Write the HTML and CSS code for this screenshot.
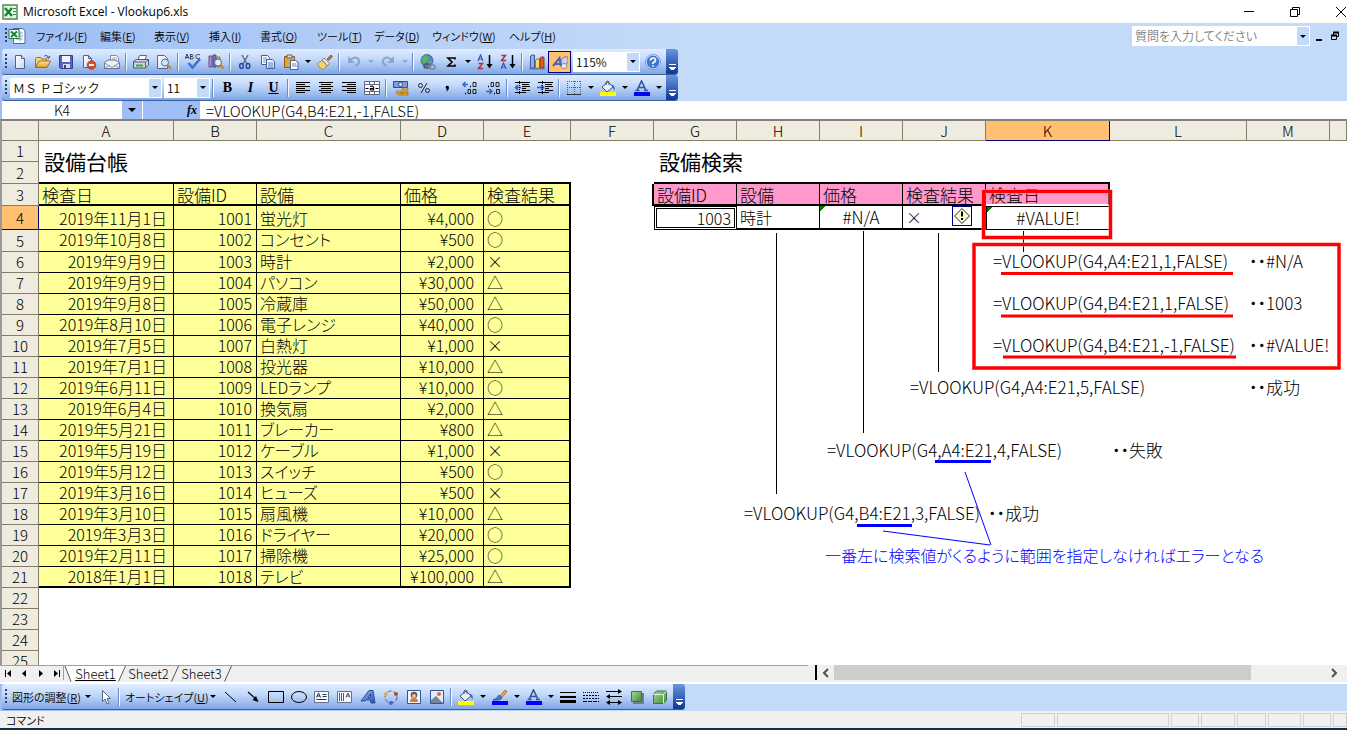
FILE: index.html
```html
<!DOCTYPE html>
<html lang="ja">
<head>
<meta charset="utf-8">
<title>Microsoft Excel - Vlookup6.xls</title>
<link rel="stylesheet" href="styles.css">
</head>
<body>
<svg class="defs" aria-hidden="true">
<defs>
<linearGradient id="gBlue" x1="0" y1="0" x2="1" y2="1"><stop offset="0" stop-color="#9dbcf5"/><stop offset="1" stop-color="#2450b0"/></linearGradient>
<linearGradient id="gPage" x1="0" y1="0" x2="1" y2="1"><stop offset="0" stop-color="#fff"/><stop offset="1" stop-color="#c8d8f2"/></linearGradient>
<linearGradient id="gGreen" x1="0" y1="0" x2="1" y2="1"><stop offset="0" stop-color="#a8dc98"/><stop offset="1" stop-color="#3c8838"/></linearGradient>
<linearGradient id="gGold" x1="0" y1="0" x2="0" y2="1"><stop offset="0" stop-color="#ffe9a0"/><stop offset="1" stop-color="#e09a20"/></linearGradient>
</defs>
<symbol id="excel" viewBox="0 0 16 16"><path d="M1 1h14v14H1z" fill="#e8f4e4" stroke="#4d8a54" stroke-width="1.500"/><path d="M3 4l7 8M10 4L3 12" stroke="#15803a" stroke-width="2.400"/><path d="M11 4.500h3M11 7.500h3M11 10.500h3" stroke="#2b8c42"/></symbol>
<symbol id="book" viewBox="0 0 18 16"><path d="M5.500.500h9l2.500 2.500v12.500H5.500z" fill="#fff" stroke="#4867a0"/><path d="M8 5h7M8 8h7M8 11h7M12 3v10" stroke="#8aa0c8"/><path d="M1 1.500h10v9H1z" fill="#f0fbf0" stroke="#267a33"/><path d="M3 3.500l6 5.500M9 3.500L3 9" stroke="#15803a" stroke-width="2"/></symbol>
<symbol id="new" viewBox="0 0 16 16"><path d="M3.500 1.500h6l3 3v10h-9z" fill="url(#gPage)" stroke="#52658e"/><path d="M9.500 1.500v3h3" fill="#dfe8f8" stroke="#52658e"/></symbol>
<symbol id="open" viewBox="0 0 16 16"><path d="M.500 13.500v-9l1-1h4l1 1.500h5v2" fill="#f7d679" stroke="#a06a14"/><path d="M.500 13.500L4 7h11.500L12 13.500z" fill="url(#gGold)" stroke="#a06a14"/><path d="M9 2.500c2-2 4-1 4.500 1.500M15 2l-1.500 2.500L11.500 3" fill="none" stroke="#394b70"/></symbol>
<symbol id="save" viewBox="0 0 16 16"><path d="M1.500 1.500h13v13h-12l-1-1z" fill="#5563c4" stroke="#353e8c"/><path d="M4 2h8v6H4z" fill="#f4f6ff"/><path d="M5 10h7v4H5z" fill="#d8dcec"/><path d="M6 11h2v3H6z" fill="#353e8c"/></symbol>
<symbol id="perm" viewBox="0 0 16 16"><path d="M2.500 1.500h5l3 3v9h-8z" fill="url(#gPage)" stroke="#52658e"/><path d="M7.500 1.500v3h3" fill="none" stroke="#52658e"/><circle cx="10.500" cy="11" r="4.300" fill="#df4a25" stroke="#8d2410" stroke-width=".6"/><path d="M8 11h5" stroke="#fff" stroke-width="2"/></symbol>
<symbol id="mail" viewBox="0 0 16 16"><path d="M6.500 1.500h6l2 2v6h-8z" fill="#fff" stroke="#7f8ba8"/><path d="M8 4h5M8 6h5" stroke="#9baac8"/><path d="M.500 8.500L4 6h7l4.500 2.500v6H.500z" fill="#eef1f8" stroke="#6a7590"/><path d="M.500 9l6.500 4h2l6-4M1 14l5-3M15 14l-5-3" fill="none" stroke="#8a95ae"/></symbol>
<symbol id="print" viewBox="0 0 16 16"><path d="M5 6l1.500-4.500h7L12 6z" fill="#fff" stroke="#5a6a8a"/><path d="M.500 7.500l3-2h12v5.500l-3 3H.500z" fill="#cfd5dc" stroke="#4d5968"/><path d="M.500 8h12l3-2.500M12.500 8v6" fill="none" stroke="#5b6572"/><path d="M3 10.500h7v2H3z" fill="#42a347"/></symbol>
<symbol id="preview" viewBox="0 0 16 16"><path d="M1.500 1.500h7l3 3v10h-10z" fill="url(#gPage)" stroke="#52658e"/><circle cx="9" cy="8.500" r="3.500" fill="#cdeaf8" stroke="#5c6880"/><path d="M11.500 11l3.500 3.500" stroke="#c08322" stroke-width="2"/></symbol>
<symbol id="spell" viewBox="0 0 16 16"><path d="M0 5l2-5 2 5M1 3.500h2M5.500 0v5M5.500.500h1.800q1.500 1 0 2H5.500h2q2 1 0 2.500h-2M15 1q-4-2-4 1.500T15 4" fill="none" stroke="#34415f"/><path d="M3.500 9l4 4.500L15 5" fill="none" stroke="#3f70d4" stroke-width="2.600"/></symbol>
<symbol id="research" viewBox="0 0 16 16"><path d="M1 2h3v11H1z" fill="#b98fc0" stroke="#6a4a94"/><path d="M5 1h3v12H5z" fill="#6d7fd0" stroke="#3a4a8c"/><path d="M9 3h3v10H9z" fill="#f0cc60" stroke="#96702a"/><circle cx="10" cy="8.500" r="3.500" fill="#dceffa" stroke="#5c6880"/><path d="M12.500 11l3 3.500" stroke="#c08322" stroke-width="2"/></symbol>
<symbol id="cut" viewBox="0 0 16 16"><path d="M5 1l5 9M11 1L6 10" stroke="#5b6f98" stroke-width="1.500"/><ellipse cx="4.500" cy="12" rx="1.800" ry="2.500" fill="none" stroke="#2b4a9c" stroke-width="1.500"/><ellipse cx="11" cy="12" rx="1.800" ry="2.500" fill="none" stroke="#2b4a9c" stroke-width="1.500"/></symbol>
<symbol id="copy" viewBox="0 0 16 16"><path d="M1.500 1.500h6l2 2v7h-8z" fill="#fff" stroke="#41609f"/><path d="M3 4h4M3 6h4M3 8h3" stroke="#7590cc"/><path d="M6.500 5.500h6l2 2v7h-8z" fill="url(#gPage)" stroke="#41609f"/><path d="M8 9h5M8 11h5M8 13h5" stroke="#5d80cc"/></symbol>
<symbol id="paste" viewBox="0 0 16 16"><path d="M1.500 2.500h10v11h-10z" fill="#e0a438" stroke="#8c5c18"/><path d="M4 1h5v3H4z" fill="#d8dce4" stroke="#5b6478"/><path d="M7.500 6.500h5l2.500 2v7H7.500z" fill="#fff" stroke="#41609f"/><path d="M9 10h4M9 12h5" stroke="#5d80cc"/></symbol>
<symbol id="brush" viewBox="0 0 16 16"><path d="M10 5l4-4 1.500 1.500-4 4z" fill="#b6793a" stroke="#6e461e" stroke-width=".7"/><path d="M7 4l5.500 5.500-2 2L5 6z" fill="#e2e4ea" stroke="#60656f" stroke-width=".7"/><path d="M5 6.500l5 5-4 4q-4-1-5.500-6z" fill="#f2d66c" stroke="#93762a" stroke-width=".7"/></symbol>
<symbol id="undo" viewBox="0 0 16 16"><path d="M4 6q6-5 9 0 1 4-4 6" fill="none" stroke="#8da5d2" stroke-width="2.200"/><path d="M2 2v7h7z" fill="#8da5d2"/></symbol>
<symbol id="redo" viewBox="0 0 16 16"><path d="M12 6Q6 1 3 6q-1 4 4 6" fill="none" stroke="#8da5d2" stroke-width="2.200"/><path d="M14 2v7H7z" fill="#8da5d2"/></symbol>
<symbol id="link" viewBox="0 0 16 16"><circle cx="7" cy="6.500" r="6" fill="#4d86d6" stroke="#245096" stroke-width=".7"/><path d="M3 3q3-3 5-1l1 3-3 2-1 3q-3-1-4-4zM9 7l3-1-1 4-2 1z" fill="#5cb752"/><rect x="4" y="10" width="6" height="4" rx="2" fill="none" stroke="#4d5668" stroke-width="1.500"/><rect x="9" y="11" width="6" height="4" rx="2" fill="none" stroke="#7b8598" stroke-width="1.500"/></symbol>
<symbol id="sigma" viewBox="0 0 16 16"><path d="M12 5.500V4H5l4 4-4 4h7v-1.500" fill="none" stroke="#000" stroke-width="1.600"/></symbol>
<symbol id="sortA" viewBox="0 0 16 16"><path d="M1 7l2.500-6L6 7M2 5h3" fill="none" stroke="#2f55b0" stroke-width="1.200"/><path d="M1.500 9.500h4l-4 5h4.500" fill="none" stroke="#a8313a" stroke-width="1.400"/><path d="M12.500 1v11" stroke="#000" stroke-width="1.500"/><path d="M9.500 10h6l-3 4.500z"/></symbol>
<symbol id="sortZ" viewBox="0 0 16 16"><path d="M1.500 1.500h4l-4 5h4.500" fill="none" stroke="#a8313a" stroke-width="1.400"/><path d="M1 15l2.500-6L6 15M2 13h3" fill="none" stroke="#2f55b0" stroke-width="1.200"/><path d="M12.500 1v11" stroke="#000" stroke-width="1.500"/><path d="M9.500 10h6l-3 4.500z"/></symbol>
<symbol id="chart" viewBox="0 0 16 16"><path d="M1.500 2l1.500-1h2.500v13h-4z" fill="#8fb0ee" stroke="#1f3f80" stroke-width=".8"/><path d="M6.500 6l1.500-1h2.500v9h-4z" fill="#f9dc5c" stroke="#8b6b14" stroke-width=".8"/><path d="M11 4l1.500-1H15v11h-4z" fill="#e4582e" stroke="#7c2110" stroke-width=".8"/><path d="M0 15h16" stroke="#5c6880"/></symbol>
<symbol id="draw" viewBox="0 0 16 16"><path d="M9 6l3-3h4v5l-3 3H9z" fill="#c8d2e4" stroke="#5c6d8c" stroke-width=".8"/><ellipse cx="12" cy="12" rx="3" ry="2.500" fill="#e8edf4" stroke="#66738c" stroke-width=".7"/><path d="M1 12L7.500 4 9 12M3 10h5.500" fill="none" stroke="#4c60bc" stroke-width="2"/></symbol>
<symbol id="help" viewBox="0 0 16 16"><circle cx="8" cy="8" r="7" fill="#3d78d8" stroke="#e8f1ff" stroke-width="1.200"/><circle cx="8" cy="8" r="7.500" fill="none" stroke="#5078b8" stroke-width=".7"/><path d="M5.500 6.500Q5.500 4 8 4t2.500 2.300Q10.500 7.500 8 9v1M8 11.300v1.400" fill="none" stroke="#fff" stroke-width="1.700"/></symbol>
<symbol id="alignL" viewBox="0 0 16 16"><path d="M1 2.500h14M1 4.500h9M1 6.500h14M1 8.500h9M1 10.500h14M1 12.500h9" stroke="#000"/></symbol>
<symbol id="alignC" viewBox="0 0 16 16"><path d="M1 2.500h14M3 4.500h10M1 6.500h14M3 8.500h10M1 10.500h14M3 12.500h10" stroke="#000"/></symbol>
<symbol id="alignR" viewBox="0 0 16 16"><path d="M1 2.500h14M6 4.500h9M1 6.500h14M6 8.500h9M1 10.500h14M6 12.500h9" stroke="#000"/></symbol>
<symbol id="merge" viewBox="0 0 16 16"><path d="M.500 1.500h15v13H.500zM.500 4.500h15M.500 11.500h15M5.500 1.500v3M10.500 1.500v3M5.500 11.500v3M10.500 11.500v3" fill="#fff" stroke="#5c6b88"/><path d="M6 6.500q3.500-1 3.500 1V10h-2q-2-.5-1-1.500h3M1.500 8.500h3M11.500 8.500h3" fill="none" stroke="#000" stroke-width="1.200"/></symbol>
<symbol id="money" viewBox="0 0 16 16"><path d="M.500 1.500h14v6H.500z" fill="#7f9cdc" stroke="#2f4c90"/><circle cx="7.500" cy="4.500" r="2" fill="#dce6fa" stroke="#2f4c90"/><path d="M9 8h6v2H9zM9 11h6v2H9zM3 11h5v2H3zM9 13h6v2H9zM5 13h4v2H5z" fill="#f2b838" stroke="#9a6514" stroke-width=".6"/></symbol>
<symbol id="percent" viewBox="0 0 16 16"><circle cx="4.500" cy="5.500" r="2" fill="none" stroke="#222"/><circle cx="11.500" cy="10.500" r="2" fill="none" stroke="#222"/><path d="M11 3L5 13" stroke="#222"/></symbol>
<symbol id="comma" viewBox="0 0 16 16"><path d="M7 6q3-1 3 2 0 2-3 4 1.500-2 .5-3Q6 8 7 6z"/></symbol>
<symbol id="incDec" viewBox="0 0 16 16"><path d="M1 4.500h5M3.500 2L1 4.500 3.500 7" fill="none" stroke="#2f62c4" stroke-width="1.500"/><path d="M8 6.500h1M3 13.500h1" stroke="#000" stroke-width="1.500"/><path d="M11 2.500h3v4h-3zM6 9.500h2.500v4H6zM11 9.500h3v4h-3z" fill="none" stroke="#222"/></symbol>
<symbol id="decDec" viewBox="0 0 16 16"><path d="M1 11.500h6M4.500 9L7 11.500 4.500 14" fill="none" stroke="#2f62c4" stroke-width="1.500"/><path d="M3 6.500h1M9 13.500h1" stroke="#000" stroke-width="1.500"/><path d="M6 2.500h2.500v4H6zM11 2.500h3v4h-3zM11.500 9.500h3v4h-3z" fill="none" stroke="#222"/></symbol>
<symbol id="outdent" viewBox="0 0 16 16"><path d="M1 2.500h15M8 4.500h7M8 6.500h8M8 8.500h4M8 10.500h8M1 12.500h11" stroke="#000"/><path d="M1.500 7.500H7M4 5L1.500 7.500 4 10" fill="none" stroke="#2f62c4" stroke-width="1.600"/><path d="M5.500 1v13" stroke="#000" stroke-dasharray="1 1"/></symbol>
<symbol id="indent" viewBox="0 0 16 16"><path d="M1 2.500h15M8 4.500h7M8 6.500h8M8 8.500h4M8 10.500h8M1 12.500h11" stroke="#000"/><path d="M0 7.500h6M4 5l2.500 2.500L4 10" fill="none" stroke="#2f62c4" stroke-width="1.600"/><path d="M5.500 1v13" stroke="#000" stroke-dasharray="1 1"/></symbol>
<symbol id="borders" viewBox="0 0 16 16"><path d="M1.500 1v13M8.500 1v13M14.500 1v13M1 1.500h14M1 7.500h14" fill="none" stroke="#56617a" stroke-dasharray="1 1"/><path d="M1 14.500h14" stroke="#333"/></symbol>
<symbol id="bucket" viewBox="0 0 16 16"><path d="M2 7l6-5 5 5-6 5z" fill="#e9f0fa" stroke="#44536e"/><path d="M6 5V2q1.500-2 3 0v3" fill="none" stroke="#44536e"/><path d="M11 4.500q5 1 3.500 6l-2-3z" fill="#3d6cc4"/><path d="M0 12h16v4H0z" fill="#ff0"/></symbol>
<symbol id="fontColor" viewBox="0 0 16 16"><path d="M3 10.500L7.500 1 12 10.500M5 7.500h5.500M1.500 10.500h4M10 10.500h4" fill="none" stroke="#34549c" stroke-width="1.600"/><path d="M0 12h16v4H0z" fill="#00f"/></symbol>
<symbol id="lineColor" viewBox="0 0 16 16"><path d="M8 7l5-6 2 1.500-5 6z" fill="#e7ad42" stroke="#8e621c" stroke-width=".7"/><path d="M7 6l3 3q-2 3-9 2 4-1 6-5z" fill="#4c76cd" stroke="#24407c" stroke-width=".7"/><path d="M0 12h16v4H0z" fill="#00f"/></symbol>
<symbol id="pointer" viewBox="0 0 16 16"><path d="M5.500 1.500v11l2.500-2.500 2 5 2-1-2-4.500h3.500z" fill="#fff" stroke="#56657e"/></symbol>
<symbol id="line" viewBox="0 0 16 16"><path d="M3 3l11 10" stroke="#000"/></symbol>
<symbol id="arrow" viewBox="0 0 16 16"><path d="M3 3l8 7" stroke="#000" stroke-width="1.200"/><path d="M13.500 13l-6-2 3.500-4z"/></symbol>
<symbol id="rect" viewBox="0 0 16 16"><path d="M.500 2.500h15v11H.500z" fill="none" stroke="#000"/></symbol>
<symbol id="oval" viewBox="0 0 16 16"><ellipse cx="8" cy="8" rx="7.500" ry="5.500" fill="none" stroke="#000"/></symbol>
<symbol id="textbox" viewBox="0 0 16 16"><path d="M.500 2.500h14v11H.500z" fill="#f6f9ff" stroke="#61718f"/><path d="M2.500 8.500L4.500 4l2 4.500M3 7h3M8.500 5.500h4M8.500 7.500h4M2.500 10.500h10" fill="none" stroke="#27344d"/></symbol>
<symbol id="vtext" viewBox="0 0 16 16"><path d="M.500 2.500h14v11H.500z" fill="#f6f9ff" stroke="#61718f"/><path d="M9 8.500L11 4l2 4.500M9.500 7h3M2.500 4v8M4.500 4v8M6.500 4v8" fill="none" stroke="#27344d" stroke-width=".8"/></symbol>
<symbol id="wordart" viewBox="0 0 16 16"><path d="M1 12L9 1.500h4L15 14h-4l-.5-3H6l-1.500 1z M8 8.500h2.500V5z" fill="url(#gBlue)" stroke="#254b9a" fill-rule="evenodd"/></symbol>
<symbol id="diagram" viewBox="0 0 16 16"><circle cx="8" cy="8" r="6" fill="none" stroke="#53617c" stroke-dasharray="4 2"/><circle cx="3" cy="5" r="2" fill="#e6b23a"/><circle cx="13" cy="5" r="2" fill="#c14335"/><circle cx="8" cy="14" r="2" fill="#4566d0"/></symbol>
<symbol id="clip" viewBox="0 0 16 16"><path d="M1.500 1.500h13v13h-13z" fill="#f1f4fa" stroke="#34559a"/><circle cx="8" cy="6" r="3.300" fill="#665850"/><circle cx="8" cy="7" r="2" fill="#eec29a"/><path d="M4 13q0-4 4-4t4 4z" fill="#e0772c"/></symbol>
<symbol id="pic" viewBox="0 0 16 16"><path d="M1.500 1.500h13v13h-13z" fill="#e3edfb" stroke="#34559a"/><circle cx="10" cy="5" r="2" fill="#df702a"/><path d="M2 11l5-4 7 7H2z" fill="#7384a4"/></symbol>
<symbol id="weight" viewBox="0 0 16 16"><path d="M0 3.500h16" stroke="#000"/><path d="M0 8h16" stroke="#000" stroke-width="2"/><path d="M0 12.500h16" stroke="#000" stroke-width="3"/></symbol>
<symbol id="dash" viewBox="0 0 16 16"><path d="M0 3.500h16" stroke="#000" stroke-dasharray="1 1"/><path d="M0 6.500h16M0 9.500h16" stroke="#000" stroke-dasharray="2 1"/><path d="M0 12.500h16" stroke="#000" stroke-dasharray="4 1"/></symbol>
<symbol id="arrows" viewBox="0 0 16 16"><path d="M0 2.500h13M3 7.500h13M2 13.500h12" stroke="#000"/><path d="M12 0l4 2.500L12 5zM4 5L0 7.500 4 10zM4 11L0 13.500 4 16zM12 11l4 2.500-4 2.500z"/></symbol>
<symbol id="shadow" viewBox="0 0 16 16"><path d="M4 4h11v11H4z" fill="#6b7c94"/><path d="M2.500 2.500h10v10h-10z" fill="url(#gGreen)" stroke="#3a7838"/></symbol>
<symbol id="cube" viewBox="0 0 16 16"><path d="M1.500 5.500l3-3.500h10v9l-3 3.500h-10z" fill="url(#gGreen)" stroke="#3a7838"/><path d="M1.500 5.500h10v9M11.500 5.500L14.500 2" fill="none" stroke="#e0f4dc"/></symbol>
</svg>

<div class="app">
<header class="titlebar">
  <svg class="icon"><use href="#excel"/></svg>
  <h1>Microsoft Excel - Vlookup6.xls</h1>
  <div class="winbtns">
    <button aria-label="最小化"><svg width="12" height="12"><path d="M1 5.500h10" stroke="#000"/></svg></button>
    <button aria-label="元に戻す"><svg width="12" height="12"><path d="M1.500 3.500h7v7h-7zM3.500 3.500v-2h7v7h-2" fill="none" stroke="#000"/></svg></button>
    <button aria-label="閉じる"><svg width="12" height="12"><path d="M1 1l10 10M11 1L1 11" stroke="#000"/></svg></button>
  </div>
</header>

<div class="dock">
  <div class="menubar">
    <span class="grip"></span>
    <svg class="bookicon"><use href="#book"/></svg>
    <nav class="menus">
      <button>ファイル(<u>F</u>)</button><button>編集(<u>E</u>)</button><button>表示(<u>V</u>)</button><button>挿入(<u>I</u>)</button><button>書式(<u>O</u>)</button><button>ツール(<u>T</u>)</button><button>データ(<u>D</u>)</button><button>ウィンドウ(<u>W</u>)</button><button>ヘルプ(<u>H</u>)</button>
    </nav>
    <div class="combo ask"><input type="text" aria-label="質問" placeholder="質問を入力してください"><button class="drop" aria-label="質問の一覧"></button></div>
    <div class="docbtns">
      <button aria-label="ブックの最小化"><svg width="10" height="10"><path d="M2 9h6" stroke="#000" stroke-width="2"/></svg></button>
      <button aria-label="ブックを元に戻す"><svg width="10" height="10"><path d="M1.500 4.500h5v4h-5zM3.500 4V1.500h5v4H7" fill="none" stroke="#000"/><path d="M1 4.500h6M3 1.500h6" stroke="#000" stroke-width="2"/></svg></button>
    </div>
  </div>

  <div class="toolbar">
    <span class="grip"></span>
    <button class="tb" aria-label="新規作成"><svg><use href="#new"/></svg></button>
    <button class="tb" aria-label="開く"><svg><use href="#open"/></svg></button>
    <button class="tb" aria-label="上書き保存"><svg><use href="#save"/></svg></button>
    <button class="tb" aria-label="アクセス許可"><svg><use href="#perm"/></svg></button>
    <button class="tb" aria-label="電子メール"><svg><use href="#mail"/></svg></button>
    <span class="sep"></span>
    <button class="tb" aria-label="印刷"><svg><use href="#print"/></svg></button>
    <button class="tb" aria-label="印刷プレビュー"><svg><use href="#preview"/></svg></button>
    <span class="sep"></span>
    <button class="tb" aria-label="スペルチェック"><svg><use href="#spell"/></svg></button>
    <button class="tb" aria-label="リサーチ"><svg><use href="#research"/></svg></button>
    <span class="sep"></span>
    <button class="tb" aria-label="切り取り"><svg><use href="#cut"/></svg></button>
    <button class="tb" aria-label="コピー"><svg><use href="#copy"/></svg></button>
    <button class="tb" aria-label="貼り付け"><svg><use href="#paste"/></svg></button>
    <button class="more" aria-label="貼り付けの一覧"></button>
    <button class="tb" aria-label="書式のコピー"><svg><use href="#brush"/></svg></button>
    <span class="sep"></span>
    <button class="tb" aria-label="元に戻す" disabled><svg><use href="#undo"/></svg></button>
    <button class="more" aria-label="元に戻すの一覧" disabled></button>
    <button class="tb" aria-label="やり直し" disabled><svg><use href="#redo"/></svg></button>
    <button class="more" aria-label="やり直しの一覧" disabled></button>
    <span class="sep"></span>
    <button class="tb" aria-label="ハイパーリンク"><svg><use href="#link"/></svg></button>
    <button class="tb" aria-label="オートSUM"><svg><use href="#sigma"/></svg></button>
    <button class="more" aria-label="関数の一覧"></button>
    <button class="tb" aria-label="昇順"><svg><use href="#sortA"/></svg></button>
    <button class="tb" aria-label="降順"><svg><use href="#sortZ"/></svg></button>
    <span class="sep"></span>
    <button class="tb" aria-label="グラフ"><svg><use href="#chart"/></svg></button>
    <button class="tb on" aria-label="図形描画" aria-pressed="true"><svg><use href="#draw"/></svg></button>
    <div class="combo zoom"><select aria-label="ズーム"><option>115%</option></select><span class="drop"></span></div>
    <button class="tb" aria-label="ヘルプ"><svg><use href="#help"/></svg></button>
    <button class="cap" aria-label="ツールバーのオプション"></button>
  </div>

  <div class="toolbar">
    <span class="grip"></span>
    <div class="combo font"><select aria-label="フォント"><option>ＭＳ Ｐゴシック</option></select><span class="drop"></span></div>
    <div class="combo size"><select aria-label="フォント サイズ"><option>11</option></select><span class="drop"></span></div>
    <span class="sep"></span>
    <button class="tb letter">B</button>
    <button class="tb letter italic">I</button>
    <button class="tb letter under">U</button>
    <span class="sep"></span>
    <button class="tb" aria-label="左揃え"><svg><use href="#alignL"/></svg></button>
    <button class="tb" aria-label="中央揃え"><svg><use href="#alignC"/></svg></button>
    <button class="tb" aria-label="右揃え"><svg><use href="#alignR"/></svg></button>
    <button class="tb" aria-label="セルを結合"><svg><use href="#merge"/></svg></button>
    <span class="sep"></span>
    <button class="tb" aria-label="通貨スタイル"><svg><use href="#money"/></svg></button>
    <button class="tb" aria-label="パーセント"><svg><use href="#percent"/></svg></button>
    <button class="tb" aria-label="桁区切り"><svg><use href="#comma"/></svg></button>
    <button class="tb" aria-label="小数点表示桁上げ"><svg><use href="#incDec"/></svg></button>
    <button class="tb" aria-label="小数点表示桁下げ"><svg><use href="#decDec"/></svg></button>
    <span class="sep"></span>
    <button class="tb" aria-label="インデント解除"><svg><use href="#outdent"/></svg></button>
    <button class="tb" aria-label="インデント"><svg><use href="#indent"/></svg></button>
    <span class="sep"></span>
    <button class="tb" aria-label="罫線"><svg><use href="#borders"/></svg></button>
    <button class="more" aria-label="罫線の一覧"></button>
    <button class="tb" aria-label="塗りつぶし"><svg><use href="#bucket"/></svg></button>
    <button class="more" aria-label="塗りつぶしの一覧"></button>
    <button class="tb" aria-label="フォントの色"><svg><use href="#fontColor"/></svg></button>
    <button class="more" aria-label="フォントの色の一覧"></button>
    <button class="cap" aria-label="ツールバーのオプション"></button>
  </div>
</div>

<div class="formulabar">
  <input class="namebox" type="text" value="K4" aria-label="名前ボックス">
  <button class="namedrop" aria-label="名前の一覧"></button>
  <button class="fx" aria-label="関数の挿入"><i>f</i>x</button>
  <input class="formula" type="text" value="=VLOOKUP(G4,B4:E21,-1,FALSE)" aria-label="数式バー">
</div>

<main class="sheet">
<table class="grid">
<colgroup><col class="w37"><col class="w135"><col class="w83"><col class="w144"><col class="w83"><col class="w87"><col class="w83"><col class="w83"><col class="w83"><col class="w83"><col class="w83"><col class="w124"><col class="w137"><col class="w83"><col></colgroup>
<thead><tr><th></th><th>A</th><th>B</th><th>C</th><th>D</th><th>E</th><th>F</th><th>G</th><th>H</th><th>I</th><th>J</th><th class="cur">K</th><th>L</th><th>M</th><th></th></tr></thead>
<tbody>
<tr><th>1</th><td class="title edge-b" colspan="5" rowspan="2">設備台帳</td><td rowspan="2"></td><td class="title edge-b" colspan="5" rowspan="2">設備検索</td><td colspan="3" rowspan="2"></td></tr>
<tr class="r22"><th>2</th></tr>
<tr class="r22 head"><th>3</th><td class="y">検査日</td><td class="y">設備ID</td><td class="y">設備</td><td class="y">価格</td><td class="y end">検査結果</td><td class="edge-r"></td><td class="p">設備ID</td><td class="p">設備</td><td class="p">価格</td><td class="p">検査結果</td><td class="p end lastp">検査日</td><td colspan="3"></td></tr>
<tr class="r23"><th class="cur">4</th><td class="y date">2019年11月1日</td><td class="y num">1001</td><td class="y">蛍光灯</td><td class="y yen">¥4,000</td><td class="y end">○</td><td></td><td class="num key">1003</td><td class="res">時計</td><td class="res mid err">#N/A</td><td class="res tag">×<button class="smart" aria-label="エラーのオプション"><svg width="18" height="18"><path d="M9 1.500L16.500 9 9 16.500 1.500 9z" fill="#ffffc8" stroke="#222"/><path d="M9 4.500v5M9 11v2" stroke="#000" stroke-width="2"/></svg></button></td><td class="mid err active">#VALUE!</td><td colspan="3"></td></tr>
<tr class="r22"><th>5</th><td class="y date">2019年10月8日</td><td class="y num">1002</td><td class="y">コンセント</td><td class="y yen">¥500</td><td class="y end">○</td><td colspan="9"></td></tr>
<tr><th>6</th><td class="y date">2019年9月9日</td><td class="y num">1003</td><td class="y">時計</td><td class="y yen">¥2,000</td><td class="y end">×</td><td colspan="5"></td><td class="fml">=VLOOKUP(G4,A4:E21,1,FALSE)</td><td></td><td class="note">・・#N/A</td><td></td></tr>
<tr><th>7</th><td class="y date">2019年9月9日</td><td class="y num">1004</td><td class="y">パソコン</td><td class="y yen">¥30,000</td><td class="y end">△</td><td colspan="9"></td></tr>
<tr><th>8</th><td class="y date">2019年9月8日</td><td class="y num">1005</td><td class="y">冷蔵庫</td><td class="y yen">¥50,000</td><td class="y end">△</td><td colspan="5"></td><td class="fml">=VLOOKUP(G4,B4:E21,1,FALSE)</td><td></td><td class="note">・・1003</td><td></td></tr>
<tr><th>9</th><td class="y date">2019年8月10日</td><td class="y num">1006</td><td class="y">電子レンジ</td><td class="y yen">¥40,000</td><td class="y end">○</td><td colspan="9"></td></tr>
<tr><th>10</th><td class="y date">2019年7月5日</td><td class="y num">1007</td><td class="y">白熱灯</td><td class="y yen">¥1,000</td><td class="y end">×</td><td colspan="5"></td><td class="fml">=VLOOKUP(G4,B4:E21,-1,FALSE)</td><td></td><td class="note">・・#VALUE!</td><td></td></tr>
<tr><th>11</th><td class="y date">2019年7月1日</td><td class="y num">1008</td><td class="y">投光器</td><td class="y yen">¥10,000</td><td class="y end">△</td><td colspan="9"></td></tr>
<tr><th>12</th><td class="y date">2019年6月11日</td><td class="y num">1009</td><td class="y">LEDランプ</td><td class="y yen">¥10,000</td><td class="y end">○</td><td colspan="4"></td><td class="fml">=VLOOKUP(G4,A4:E21,5,FALSE)</td><td colspan="2"></td><td class="note">・・成功</td><td></td></tr>
<tr><th>13</th><td class="y date">2019年6月4日</td><td class="y num">1010</td><td class="y">換気扇</td><td class="y yen">¥2,000</td><td class="y end">△</td><td colspan="9"></td></tr>
<tr><th>14</th><td class="y date">2019年5月21日</td><td class="y num">1011</td><td class="y">ブレーカー</td><td class="y yen">¥800</td><td class="y end">△</td><td colspan="9"></td></tr>
<tr><th>15</th><td class="y date">2019年5月19日</td><td class="y num">1012</td><td class="y">ケーブル</td><td class="y yen">¥1,000</td><td class="y end">×</td><td colspan="3"></td><td class="fml">=VLOOKUP(G4,A4:E21,4,FALSE)</td><td colspan="2"></td><td class="note">・・失敗</td><td colspan="2"></td></tr>
<tr><th>16</th><td class="y date">2019年5月12日</td><td class="y num">1013</td><td class="y">スイッチ</td><td class="y yen">¥500</td><td class="y end">○</td><td colspan="9"></td></tr>
<tr><th>17</th><td class="y date">2019年3月16日</td><td class="y num">1014</td><td class="y">ヒューズ</td><td class="y yen">¥500</td><td class="y end">×</td><td colspan="9"></td></tr>
<tr><th>18</th><td class="y date">2019年3月10日</td><td class="y num">1015</td><td class="y">扇風機</td><td class="y yen">¥10,000</td><td class="y end">△</td><td colspan="2"></td><td class="fml">=VLOOKUP(G4,B4:E21,3,FALSE)</td><td colspan="2"></td><td class="note">・・成功</td><td colspan="3"></td></tr>
<tr><th>19</th><td class="y date">2019年3月3日</td><td class="y num">1016</td><td class="y">ドライヤー</td><td class="y yen">¥20,000</td><td class="y end">○</td><td colspan="9"></td></tr>
<tr><th>20</th><td class="y date">2019年2月11日</td><td class="y num">1017</td><td class="y">掃除機</td><td class="y yen">¥25,000</td><td class="y end">○</td><td colspan="3"></td><td class="remark" colspan="6">一番左に検索値がくるように範囲を指定しなければエラーとなる</td></tr>
<tr class="foot"><th>21</th><td class="y date">2018年1月1日</td><td class="y num">1018</td><td class="y">テレビ</td><td class="y yen">¥100,000</td><td class="y end">△</td><td colspan="9"></td></tr>
<tr><th>22</th><td colspan="14"></td></tr>
<tr><th>23</th><td colspan="14"></td></tr>
<tr><th>24</th><td colspan="14"></td></tr>
<tr><th>25</th><td colspan="14"></td></tr>
</tbody>
</table>
<svg class="drawing" aria-hidden="true">
  <g stroke="#000"><path d="M776.500 112v261M863.500 110v202M938.500 112v139M1023.500 110v21"/></g>
  <g fill="none" stroke="#f88" stroke-width="4"><path d="M983.500 70.500h127v46h-127zM974 123.500h365v123.500H974z"/></g>
  <g fill="none" stroke="#f00" stroke-width="3"><path d="M983.500 70.500h127v46h-127zM974 123.500h365v123.500H974z"/></g>
  <g stroke="#f00" stroke-width="3"><path d="M1001 152.500h232M1001 195h232M1003 236h233"/></g>
  <g stroke="#00f" stroke-width="3"><path d="M935 340.500h56M857 404.500h55"/></g>
  <g stroke="#00f"><path d="M965 351l26 73M883 410l107 14"/></g>
</svg>
</main>

<div class="tabrow">
  <div class="tabs">
    <div class="tabnav">
      <button aria-label="先頭のシート"><svg width="9" height="9"><path d="M1.500 1v7" stroke="#000"/><path d="M7 1v7L3 4.500z"/></svg></button>
      <button aria-label="前のシート"><svg width="9" height="9"><path d="M6 1v7L2 4.500z"/></svg></button>
      <button aria-label="次のシート"><svg width="9" height="9"><path d="M3 1v7l4-3.500z"/></svg></button>
      <button aria-label="最後のシート"><svg width="9" height="9"><path d="M7.500 1v7" stroke="#000"/><path d="M2 1v7l4-3.500z"/></svg></button>
    </div>
    <svg class="slant" width="10" height="16"><path d="M0 0h10v15H7z" fill="#fff"/><path d="M1 0l6 15.500" stroke="#555"/></svg>
    <button class="tab sel">Sheet1</button>
    <svg class="slant" width="10" height="16"><path d="M0 0h9L2 15H0z" fill="#fff"/><path d="M8.500 0l-7 15.500" stroke="#555"/></svg>
    <button class="tab">Sheet2</button>
    <svg class="slant" width="10" height="16"><path d="M8.500 0l-7 15.500" stroke="#555"/></svg>
    <button class="tab">Sheet3</button>
    <svg class="slant" width="10" height="16"><path d="M8.500 0l-7 15.500" stroke="#555"/></svg>
  </div>
  <div class="splitter"></div>
  <div class="hscroll">
    <button aria-label="左へ"><svg width="10" height="10"><path d="M7 1L3 5l4 4" fill="none" stroke="#505050" stroke-width="2"/></svg></button>
    <div class="track"><div class="thumb"></div></div>
    <button aria-label="右へ"><svg width="10" height="10"><path d="M3 1l4 4-4 4" fill="none" stroke="#505050" stroke-width="2"/></svg></button>
  </div>
</div>

<div class="drawdock">
  <div class="toolbar">
    <span class="grip"></span>
    <button class="txt adjust">図形の調整(<u>R</u>)</button><button class="more" aria-label="図形の調整の一覧"></button>
    <button class="tb" aria-label="オブジェクトの選択"><svg><use href="#pointer"/></svg></button>
    <span class="sep"></span>
    <button class="txt shapes">オートシェイプ(<u>U</u>)</button><button class="more" aria-label="オートシェイプの一覧"></button>
    <button class="tb" aria-label="直線"><svg><use href="#line"/></svg></button>
    <button class="tb" aria-label="矢印"><svg><use href="#arrow"/></svg></button>
    <button class="tb" aria-label="四角形"><svg><use href="#rect"/></svg></button>
    <button class="tb" aria-label="楕円"><svg><use href="#oval"/></svg></button>
    <button class="tb" aria-label="テキスト ボックス"><svg><use href="#textbox"/></svg></button>
    <button class="tb" aria-label="縦書きテキスト ボックス"><svg><use href="#vtext"/></svg></button>
    <button class="tb" aria-label="ワードアート"><svg><use href="#wordart"/></svg></button>
    <button class="tb" aria-label="図表"><svg><use href="#diagram"/></svg></button>
    <button class="tb" aria-label="クリップアート"><svg><use href="#clip"/></svg></button>
    <button class="tb" aria-label="図の挿入"><svg><use href="#pic"/></svg></button>
    <span class="sep"></span>
    <button class="tb" aria-label="塗りつぶしの色"><svg><use href="#bucket"/></svg></button><button class="more" aria-label="塗りつぶしの色の一覧"></button>
    <button class="tb" aria-label="線の色"><svg><use href="#lineColor"/></svg></button><button class="more" aria-label="線の色の一覧"></button>
    <button class="tb" aria-label="文字の色"><svg><use href="#fontColor"/></svg></button><button class="more" aria-label="文字の色の一覧"></button>
    <button class="tb" aria-label="線の種類"><svg><use href="#weight"/></svg></button>
    <button class="tb" aria-label="点線"><svg><use href="#dash"/></svg></button>
    <button class="tb" aria-label="矢印の種類"><svg><use href="#arrows"/></svg></button>
    <button class="tb" aria-label="影"><svg><use href="#shadow"/></svg></button>
    <button class="tb" aria-label="3-D"><svg><use href="#cube"/></svg></button>
    <button class="cap" aria-label="ツールバーのオプション"></button>
  </div>
</div>

<footer class="status">
  <span>コマンド</span>
  <div class="panes"><i></i><i></i><i></i><i></i><i></i><i></i><i></i><i></i></div>
</footer>
<div class="taskbar"></div>
</div>
</body>
</html>
```
FILE: styles.css
```css
* { box-sizing: border-box; }
body {
  margin: 0;
  font-family: "Noto Sans CJK JP", sans-serif;
  font-size: 12px;
  font-weight: 350;
  color: #000;
  background: #fff;
}
button, input, select {
  font: inherit;
  color: inherit;
  margin: 0;
  padding: 0;
  border: 0;
  background: none;
  border-radius: 0;
}
select { appearance: none; }
button { display: flex; align-items: center; justify-content: center; white-space: nowrap; flex: none; }
svg { display: block; flex: none; }
.defs { position: absolute; width: 0; height: 0; }
.app { display: flex; flex-direction: column; height: 100vh; overflow: hidden; }
.app > * { flex: none; }

/* title bar */
.titlebar { display: flex; align-items: center; height: 23px; padding-left: 2px; gap: 5px; background: #fff; }
.titlebar .icon { width: 16px; height: 16px; }
.titlebar h1 { flex: 1; margin: 0; font: 12px/20px "Open Sans", "Noto Sans CJK JP", sans-serif; }
.winbtns { display: flex; gap: 34px; }

/* menu and toolbars */
.dock { background: linear-gradient(90deg, #9ebef5, #c4daf9 50%); }
.menubar { display: flex; align-items: center; height: 26px; padding-left: 4px; }
.grip {
  flex: none;
  width: 4px;
  height: 16px;
  background: repeating-linear-gradient(#27417a 0 2px, transparent 2px 4px) 1px 0 / 2px 100% no-repeat;
}
.bookicon { width: 18px; height: 16px; }
.menus {
  display: grid;
  grid-template-columns: 64px 54px 55px 51px 57px 57px 58px 77px auto;
  flex: 1;
  padding-left: 10px;
}
.menus button, .txt { justify-content: flex-start; font-size: 11px; font-feature-settings: "palt"; }
.combo { display: flex; flex: none; height: 20px; background: #fff; border: 1px solid #fff; }
.combo select, .combo input { flex: 1; min-width: 0; padding-left: 2px; line-height: 16px; }
.drop { width: 12px; background: #c4daf9; display: flex; align-items: center; justify-content: center; }
.drop::after, .more::after, .namedrop::after {
  content: "";
  border: 3px solid transparent;
  border-top-color: #000;
  border-bottom: 0;
}
.more:disabled::after { border-top-color: #8da5d2; }
.ask { width: 178px; }
.ask input { font-feature-settings: "palt"; }
.ask input::placeholder { color: #808080; opacity: 1; }
.docbtns { display: flex; gap: 6px; padding: 0 7px 0 4px; }
.toolbar {
  display: flex;
  align-items: center;
  width: fit-content;
  height: 26px;
  margin-left: 2px;
  padding-left: 2px;
  border-bottom: 1px solid #3b619c;
  border-radius: 3px;
  background: linear-gradient(#e0ecff, #c4dafb 40%, #81a6e6);
}
.tb { width: 23px; height: 22px; }
.tb svg { width: 16px; height: 16px; }
.tb.on { border: 1px solid #000080; background: #ffc06f; }
.more { width: 11px; height: 22px; }
.sep { flex: none; width: 6px; height: 18px; background: linear-gradient(90deg, #6a8ccb 50%, #f1f9ff 50%) center / 2px 100% no-repeat; }
.zoom { width: 67px; margin: 0 1px 0 2px; }
.font { width: 152px; margin-left: 2px; }
.size { width: 46px; margin-left: 2px; }
.font select { font-size: 12px; }
.letter { font: bold 14px/20px "Liberation Serif", serif; }
.italic { font-style: italic; }
.under { text-decoration: underline; }
.cap {
  position: relative;
  align-self: stretch;
  width: 12px;
  height: auto;
  margin-left: 2px;
  border-radius: 0 3px 3px 0;
  background: linear-gradient(#6b94e0, #0b3794);
}
.cap::after {
  content: "";
  position: absolute;
  right: 2px;
  bottom: 3px;
  width: 7px;
  height: 7px;
  background: linear-gradient(#fff, #fff) 0 0 / 7px 1px no-repeat, linear-gradient(#fff, #fff) 0 3px / 7px 1px no-repeat, linear-gradient(#fff, #fff) 1px 4px / 5px 1px no-repeat, linear-gradient(#fff, #fff) 2px 5px / 3px 1px no-repeat;
}

/* formula bar */
.formulabar { display: flex; height: 18px; background: #9ebef5; font-size: 14px; font-weight: 300; }
.namebox { width: 120px; margin-left: 2px; text-align: center; background: #fff; }
.namedrop { width: 21px; border-right: 1px solid #fff; }
.namedrop::after { border-width: 4px 4px 0; }
.fx { width: 57px; padding-right: 3px; justify-content: flex-end; font: italic bold 12px/16px "Liberation Serif", serif; }
.formula { flex: 1; padding-left: 6px; font-size: 15px; background: #fff; }

/* worksheet */
.sheet {
  position: relative;
  flex: 1 1 0 !important;
  min-height: 0;
  overflow: hidden;
  border-top: 2px solid #808080;
  border-left: 2px solid #9a9a9a;
}
.grid {
  width: 100%;
  table-layout: fixed;
  border-collapse: separate;
  border-spacing: 0;
  font-size: 16px;
  font-weight: 300;
  line-height: 18px;
}
.w37 { width: 37px; } .w83 { width: 83px; } .w87 { width: 87px; } .w124 { width: 124px; }
.w135 { width: 135px; } .w137 { width: 137px; } .w144 { width: 144px; }
.grid tr { height: 21px; }
.grid thead tr { height: 20px; }
.grid .r22 { height: 22px; }
.grid .r23 { height: 23px; }
.grid th {
  padding: 0;
  font-size: 15px;
  font-weight: 300;
  background: #efebde;
  border-right: 1px solid #808066;
  border-bottom: 1px solid #808066;
}
.grid th.cur { background: #ffc06f; border-color: #000080; }
.grid td { padding: 0; white-space: nowrap; vertical-align: top; }
.grid .head td { vertical-align: bottom; }
.grid .r23 td { vertical-align: middle; }
.grid .y, .grid .p {
  padding-left: 3px;
  font-feature-settings: "palt";
  border-right: 1px solid #000;
  border-bottom: 1px solid #000;
}
.grid .y { background: #ff9; }
.grid .p { background: #ff99cc; }
.grid .head .y, .grid .head .p { font-size: 17px; border-bottom-width: 2px; }
.grid .foot .y { border-bottom-width: 2px; }
.grid .end { border-right-width: 2px; }
.grid .head .lastp { border-bottom-color: #fff; }
.grid .edge-b { border-bottom: 2px solid #000; }
.grid .edge-r { border-right: 2px solid #000; }
.grid .title { padding-left: 5px; font-size: 21px; font-weight: 400; line-height: 40px; }
.grid .date { padding-right: 6px; text-align: right; font-feature-settings: normal; }
.grid .num { padding-right: 4px; text-align: right; }
.grid .yen { padding-right: 9px; text-align: right; }
.grid .mid { text-align: center; }
.grid .key { border: 3px double #000; padding-right: 3px; }
.grid .res { padding-left: 3px; border-right: 1px solid #000; border-bottom: 2px solid #000; }
.grid .err { padding-left: 0; font-size: 17px; background: linear-gradient(135deg, #008000 4px, transparent 4px) no-repeat; }
.grid .active { border: 1px solid #000; }
.grid .tag { position: relative; }
.smart { position: absolute; right: 13px; top: 0; width: 20px; height: 20px; border: 1px solid #000080; background: #fff; }
.grid .fml { padding-left: 7px; }
.grid .note { padding-left: 2px; }
.grid .fml, .grid .note { font-size: 17px; font-feature-settings: "palt"; }
.grid .remark { padding-left: 5px; color: #00f; font-feature-settings: "palt"; }
.drawing { position: absolute; top: 0; left: -2px; width: calc(100% + 2px); height: 100%; pointer-events: none; }

/* sheet tabs */
.tabrow { display: flex; height: 19px; padding-bottom: 2px; background: #f0f0f0; border-bottom: 2px solid #fff; }
.tabs { display: flex; width: 60%; border-top: 1px solid #a0a0a0; }
.tabnav { display: flex; align-items: center; justify-content: space-between; width: 64px; padding: 0 2px 0 4px; border-right: 1px solid #a0a0a0; }
.tab { width: 43px; font-size: 13px; font-weight: 300; line-height: 15px; }
.tab.sel { background: #fff; text-decoration: underline; }
.splitter { width: 9px; border-right: 2px solid #000; }
.hscroll { display: flex; flex: 1; align-items: stretch; padding-right: 5px; }
.hscroll button { width: 17px; }
.track { flex: 1; }
.thumb { width: 85%; height: 100%; background: #cdcdcd; }

/* drawing toolbar and status bar */
.drawdock { background: linear-gradient(90deg, #9ebef5, #c4daf9 50%); height: 27px; }
.adjust { width: 74px; padding-left: 4px; }
.shapes { width: 85px; padding-left: 3px; }
.status { display: flex; align-items: center; justify-content: space-between; height: 17px; padding-left: 6px; background: #f0f0f0; font-size: 11px; font-feature-settings: "palt"; }
.panes { display: grid; grid-template-columns: 34px 112px 28px 34px 29px 33px 28px 14px; gap: 2px; height: 14px; }
.panes i { border: 1px solid #d0d0d0; }
.taskbar { height: 2px; background: #1c2c40; }
```
